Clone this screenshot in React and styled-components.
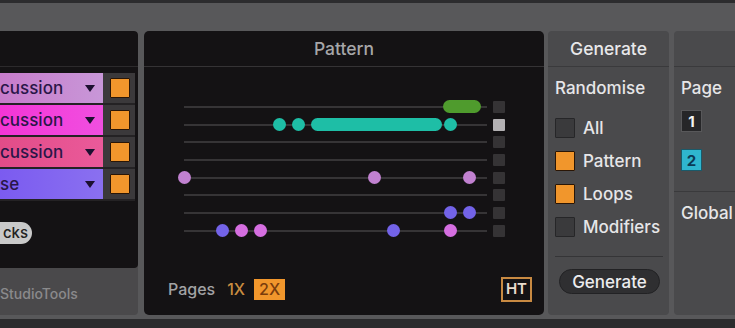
import React from "react";
import styled, { createGlobalStyle } from "styled-components";

const Global = createGlobalStyle`
  html, body { margin: 0; padding: 0; background: #58585a; }
  body { font-family: Inter, "Liberation Sans", Arial, sans-serif; }
  * { box-sizing: border-box; }
`;

const Frame = styled.div`
  width: 735px;
  height: 328px;
  overflow: hidden;
  display: flex;
  flex-direction: column;
  background: #58585a;
`;

const TopEdge = styled.div`
  height: 3px;
  background: #2c2c2e;
  flex: none;
`;

const BottomEdge = styled.div`
  height: 9px;
  background: #2b2b2d;
  flex: none;
`;

const Main = styled.div`
  flex: 1;
  display: flex;
  padding: 28px 0 4px 0;
  min-height: 0;
`;

/* ---------- Left (tracks) column ---------- */
const LeftPanel = styled.div`
  width: 138px;
  flex: none;
  display: flex;
  flex-direction: column;
  background: #4a494b;
  border-radius: 0 4px 4px 0;
  overflow: hidden;
`;

const LeftDark = styled.div`
  height: 237px;
  flex: none;
  background: #141214;
  border-radius: 0 4px 4px 0;
  display: flex;
  flex-direction: column;
`;

const LeftHeader = styled.div`
  height: 36px;
  border-bottom: 1px solid #2c2a2c;
  flex: none;
`;

const TrackList = styled.div`
  margin-top: 6px;
  width: 135px;
  display: flex;
  flex-direction: column;
  gap: 2px;
  background: #242224;
  padding-bottom: 2px;
`;

const TrackRow = styled.div`
  height: 30px;
  display: flex;
`;

const TrackName = styled.div`
  width: 103px;
  display: flex;
  align-items: center;
  justify-content: space-between;
  padding-right: 8px;
  background: ${(p) => p.$bg};
  color: #2a1648;
  font-size: 17px;
  font-weight: 500;
  line-height: 20px;
  overflow: hidden;
  white-space: nowrap;
`;

const Caret = styled.span`
  width: 0;
  height: 0;
  border-left: 5px solid transparent;
  border-right: 5px solid transparent;
  border-top: 7px solid #1c1030;
`;

const TrackCell = styled.div`
  flex: 1;
  background: #3b393b;
  display: flex;
  align-items: center;
  padding-left: 7px;
`;

const Toggle = styled.div`
  width: 20px;
  height: 20px;
  background: ${(p) => (p.$on ? "#f1962c" : "#3a3a3c")};
  border: 1px solid ${(p) => (p.$on ? "#2a1606" : "#262628")};
  border-radius: 1px;
  flex: none;
`;

const Pill = styled.div`
  margin-top: 21px;
  height: 22px;
  width: 32px;
  border-radius: 0 11px 11px 0;
  background: #c9c9c9;
  color: #222;
  font-size: 15px;
  font-weight: 500;
  line-height: 18px;
  display: flex;
  align-items: center;
  justify-content: flex-end;
  padding-right: 4px;
`;

const LeftFooter = styled.div`
  flex: 1;
  display: flex;
  align-items: center;
  color: #8a8a8c;
  font-size: 14px;
  font-weight: 500;
  line-height: 18px;
  padding-top: 4px;
`;

/* ---------- Pattern panel ---------- */
const PatternPanel = styled.div`
  margin-left: 6px;
  width: 400px;
  flex: none;
  background: #141214;
  border-radius: 5px;
  display: flex;
  flex-direction: column;
`;

const PanelHeader = styled.div`
  height: 36px;
  flex: none;
  border-bottom: 1px solid ${(p) => p.$line || "#353335"};
  display: flex;
  align-items: center;
  justify-content: center;
  color: ${(p) => p.$color || "#a6a6a8"};
  font-size: 17.5px;
  font-weight: 500;
  line-height: 22px;
`;

const Lanes = styled.div`
  margin-top: 31px;
  padding-left: 40px;
  display: flex;
  flex-direction: column;
`;

const Lane = styled.div`
  height: 17.7px;
  display: flex;
  align-items: center;
`;

const Track = styled.div`
  position: relative;
  width: 303px;
  height: 2px;
  background: #363436;
`;

const Note = styled.div`
  position: absolute;
  top: 50%;
  height: 13px;
  margin-top: -6.5px;
  border-radius: 7px;
  background: ${(p) => p.$color};
`;

const LaneMark = styled.div`
  margin-left: 6px;
  width: 12px;
  height: 12px;
  border-radius: 1px;
  background: ${(p) => (p.$on ? "#b3b1b3" : "#353335")};
`;

const PatternFooter = styled.div`
  margin-top: auto;
  height: 26px;
  margin-bottom: 13px;
  display: flex;
  align-items: center;
  padding: 0 12px 0 24px;
  font-size: 16px;
  font-weight: 500;
  line-height: 20px;
`;

const FooterLabel = styled.span`
  color: #a2a2a4;
`;

const Mult = styled.span`
  margin-left: ${(p) => p.$ml}px;
  height: 21px;
  padding: 0 5px;
  display: flex;
  align-items: center;
  color: ${(p) => (p.$on ? "#7a3c0c" : "#c98c40")};
  background: ${(p) => (p.$on ? "#f1962c" : "transparent")};
`;

const HT = styled.span`
  margin-left: auto;
  height: 25px;
  padding: 0 3px;
  display: flex;
  align-items: center;
  border: 2px solid #c98a42;
  color: #eadccc;
  font-weight: 600;
  font-size: 15px;
`;

/* ---------- Generate panel ---------- */
const GrayPanel = styled.div`
  margin-left: ${(p) => p.$ml}px;
  width: ${(p) => p.$w}px;
  flex: none;
  background: #4a4a4c;
  border-radius: ${(p) => p.$radius};
  display: flex;
  flex-direction: column;
  overflow: hidden;
`;

const GenBody = styled.div`
  padding: 11px 6px 0 7px;
  display: flex;
  flex-direction: column;
`;

const Label = styled.div`
  color: #e6e6e8;
  font-size: 17px;
  font-weight: 500;
  line-height: 20px;
  white-space: nowrap;
`;

const CheckList = styled.div`
  margin-top: 19px;
  display: flex;
  flex-direction: column;
  gap: 12px;
`;

const CheckRow = styled.div`
  height: 21px;
  display: flex;
  align-items: center;
  gap: 8px;
`;

const Divider = styled.div`
  margin-top: 19px;
  height: 1px;
  background: #353537;
`;

const GenButton = styled.div`
  margin: 12px 3px 0 4px;
  height: 25px;
  border-radius: 13px;
  background: #2f2f31;
  border: 1px solid #222224;
  color: #ececee;
  font-size: 17px;
  font-weight: 500;
  line-height: 20px;
  display: flex;
  align-items: center;
  justify-content: center;
`;

/* ---------- Right panel ---------- */
const RightSection = styled.div`
  padding: 11px 0 0 7px;
  display: flex;
  flex-direction: column;
  border-bottom: ${(p) => (p.$line ? "1px solid #3a3a3c" : "none")};
  height: ${(p) => p.$h || "auto"};
`;

const PageBox = styled.div`
  margin-top: ${(p) => p.$mt}px;
  width: 21px;
  height: 22px;
  display: flex;
  align-items: center;
  justify-content: center;
  font-weight: 700;
  font-size: 15px;
  background: ${(p) => (p.$on ? "#2fb6cf" : "#262628")};
  color: ${(p) => (p.$on ? "#0b3a55" : "#f2f2f2")};
  border: 1px solid ${(p) => (p.$on ? "#1a5a6a" : "#58585a")};
`;

const rows = [
  { text: "cussion", bg: "linear-gradient(90deg, #c77ccb, #c897d8)" },
  { text: "cussion", bg: "linear-gradient(90deg, #f435d6, #f04fe0)" },
  { text: "cussion", bg: "linear-gradient(90deg, #e24c88, #ea5a9a)" },
  { text: "se", bg: "linear-gradient(90deg, #7b5bf0, #8a70f0)" },
];

const TEAL = "#1ebea6";
const GREEN = "#4f9b2d";
const LAV = "#c181d0";
const PINK = "#d56ee0";
const BLUE = "#7363e8";

const dot = (step, color) => ({ left: step * 19 - 6.5, width: 13, color });

const lanes = [
  { on: false, notes: [{ left: 259, width: 38, color: GREEN }] },
  {
    on: true,
    notes: [dot(5, TEAL), dot(6, TEAL), { left: 127, width: 131, color: TEAL }, dot(14, TEAL)],
  },
  { on: false, notes: [] },
  { on: false, notes: [] },
  { on: false, notes: [dot(0, LAV), dot(10, LAV), dot(15, LAV)] },
  { on: false, notes: [] },
  { on: false, notes: [dot(14, BLUE), dot(15, BLUE)] },
  { on: false, notes: [dot(2, BLUE), dot(3, PINK), dot(4, PINK), dot(11, BLUE), dot(14, PINK)] },
];

const checks = [
  { label: "All", on: false },
  { label: "Pattern", on: true },
  { label: "Loops", on: true },
  { label: "Modifiers", on: false },
];

export default function App() {
  return (
    <>
      <Global />
      <Frame>
        <TopEdge />
        <Main>
          <LeftPanel>
            <LeftDark>
              <LeftHeader />
              <TrackList>
                {rows.map((r, i) => (
                  <TrackRow key={i}>
                    <TrackName $bg={r.bg}>
                      <span>{r.text}</span>
                      <Caret />
                    </TrackName>
                    <TrackCell>
                      <Toggle $on />
                    </TrackCell>
                  </TrackRow>
                ))}
              </TrackList>
              <Pill>cks</Pill>
            </LeftDark>
            <LeftFooter>StudioTools</LeftFooter>
          </LeftPanel>

          <PatternPanel>
            <PanelHeader>Pattern</PanelHeader>
            <Lanes>
              {lanes.map((l, i) => (
                <Lane key={i}>
                  <Track>
                    {l.notes.map((n, j) => (
                      <Note key={j} $color={n.color} style={{ left: n.left, width: n.width }} />
                    ))}
                  </Track>
                  <LaneMark $on={l.on} />
                </Lane>
              ))}
            </Lanes>
            <PatternFooter>
              <FooterLabel>Pages</FooterLabel>
              <Mult $ml={7}>1X</Mult>
              <Mult $ml={4} $on>
                2X
              </Mult>
              <HT>HT</HT>
            </PatternFooter>
          </PatternPanel>

          <GrayPanel $ml={4} $w={121} $radius="4px">
            <PanelHeader $color="#e8e8ea" $line="#3a3a3c">
              Generate
            </PanelHeader>
            <GenBody>
              <Label>Randomise</Label>
              <CheckList>
                {checks.map((c) => (
                  <CheckRow key={c.label}>
                    <Toggle $on={c.on} />
                    <Label>{c.label}</Label>
                  </CheckRow>
                ))}
              </CheckList>
              <Divider />
              <GenButton>Generate</GenButton>
            </GenBody>
          </GrayPanel>

          <GrayPanel $ml={5} $w={61} $radius="4px 0 0 4px">
            <PanelHeader $line="#3a3a3c" />
            <RightSection $line $h="125px">
              <Label>Page</Label>
              <PageBox $mt={12}>1</PageBox>
              <PageBox $mt={17} $on>
                2
              </PageBox>
            </RightSection>
            <RightSection>
              <Label>Global</Label>
            </RightSection>
          </GrayPanel>
        </Main>
        <BottomEdge />
      </Frame>
    </>
  );
}
